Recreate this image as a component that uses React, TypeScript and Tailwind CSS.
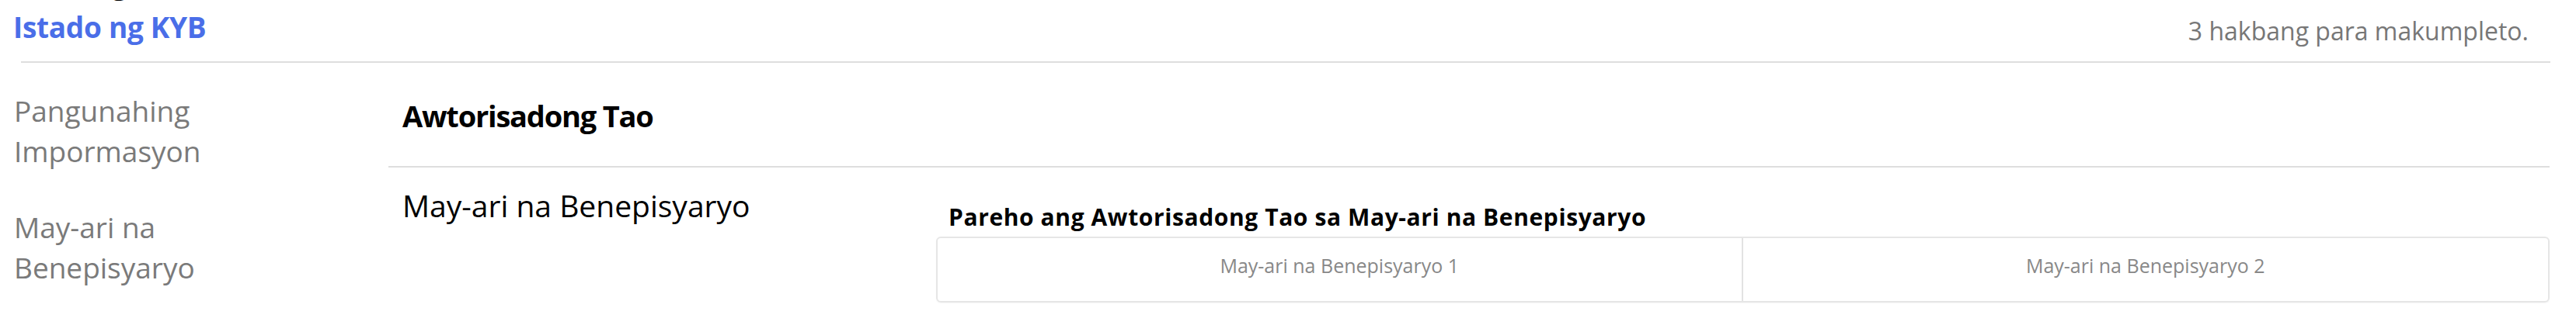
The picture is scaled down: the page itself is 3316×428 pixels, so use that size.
import React from 'react';

const sideItems = [
  ['Pangunahing', 'Impormasyon'],
  ['May-ari na', 'Benepisyaryo'],
];

const owners = ['May-ari na Benepisyaryo 1', 'May-ari na Benepisyaryo 2'];

const App = () => {
  return (
    <div className="min-h-screen bg-white overflow-hidden font-['Open_Sans',sans-serif]">
      {/* heading scrolled above the view */}
      <h1 className="-mt-[49px] pl-[18px] text-[36px] leading-[56px] font-bold text-black whitespace-nowrap">
        Buod ng Status, KYB
      </h1>

      {/* Status header */}
      <div className="flex justify-between items-start pt-[2px] pl-[17px] pr-[61px]">
        <h2 className="text-[37px] leading-[52px] font-bold tracking-[-0.3px] text-[#4a6ee8]">Istado ng KYB</h2>
        <p className="mt-[9px] text-[32px] leading-[44px] text-[#777]">3 hakbang para makumpleto.</p>
      </div>
      <div className="mt-[17px] ml-[27px] mr-[33px] h-[2px] bg-[#dedede]" />

      <div className="grid grid-cols-[500px_1fr] mr-[34px]">
        {/* Steps */}
        <div className="pt-[36px] pl-[18px] w-[380px] flex flex-col gap-[46px]">
          {sideItems.map((item) => (
            <p key={item[0]} className="text-[37px] leading-[52px] text-[#7a7a7a]">
              {item[0]}
              <br />
              {item[1]}
            </p>
          ))}
        </div>

        {/* Form sections */}
        <div className="pt-[36px]">
          <div className="pt-[4px] pb-[37px] pl-[18px] border-b-2 border-[#dedede]">
            <h3 className="text-[38px] leading-[56px] font-bold text-black tracking-[-1.2px]">
              Awtorisadong Tao
            </h3>
          </div>

          <div className="grid grid-cols-[705px_1fr]">
            <p className="pt-[22px] pl-[18px] text-[39px] leading-[54px] text-black">
              May-ari na Benepisyaryo
            </p>
            <div className="pt-[44px]">
              <p className="pl-[16px] text-[30px] leading-[40px] font-bold tracking-[0.6px] text-black">
                Pareho ang Awtorisadong Tao sa May-ari na Benepisyaryo
              </p>
              <div className="mt-[5px] h-[85px] grid grid-cols-2 rounded-[6px] border-2 border-[#e6e6e6] shadow-[0_1px_2px_rgba(0,0,0,0.04)]">
                {owners.map((o, i) => (
                  <div
                    key={o}
                    className={
                      'flex items-center justify-center pb-[10px] text-[25px] text-[#888] ' +
                      (i === 0 ? 'border-r-2 border-[#e3e3e3]' : '')
                    }
                  >
                    {o}
                  </div>
                ))}
              </div>
            </div>
          </div>
        </div>
      </div>
    </div>
  );
};

export default App;
